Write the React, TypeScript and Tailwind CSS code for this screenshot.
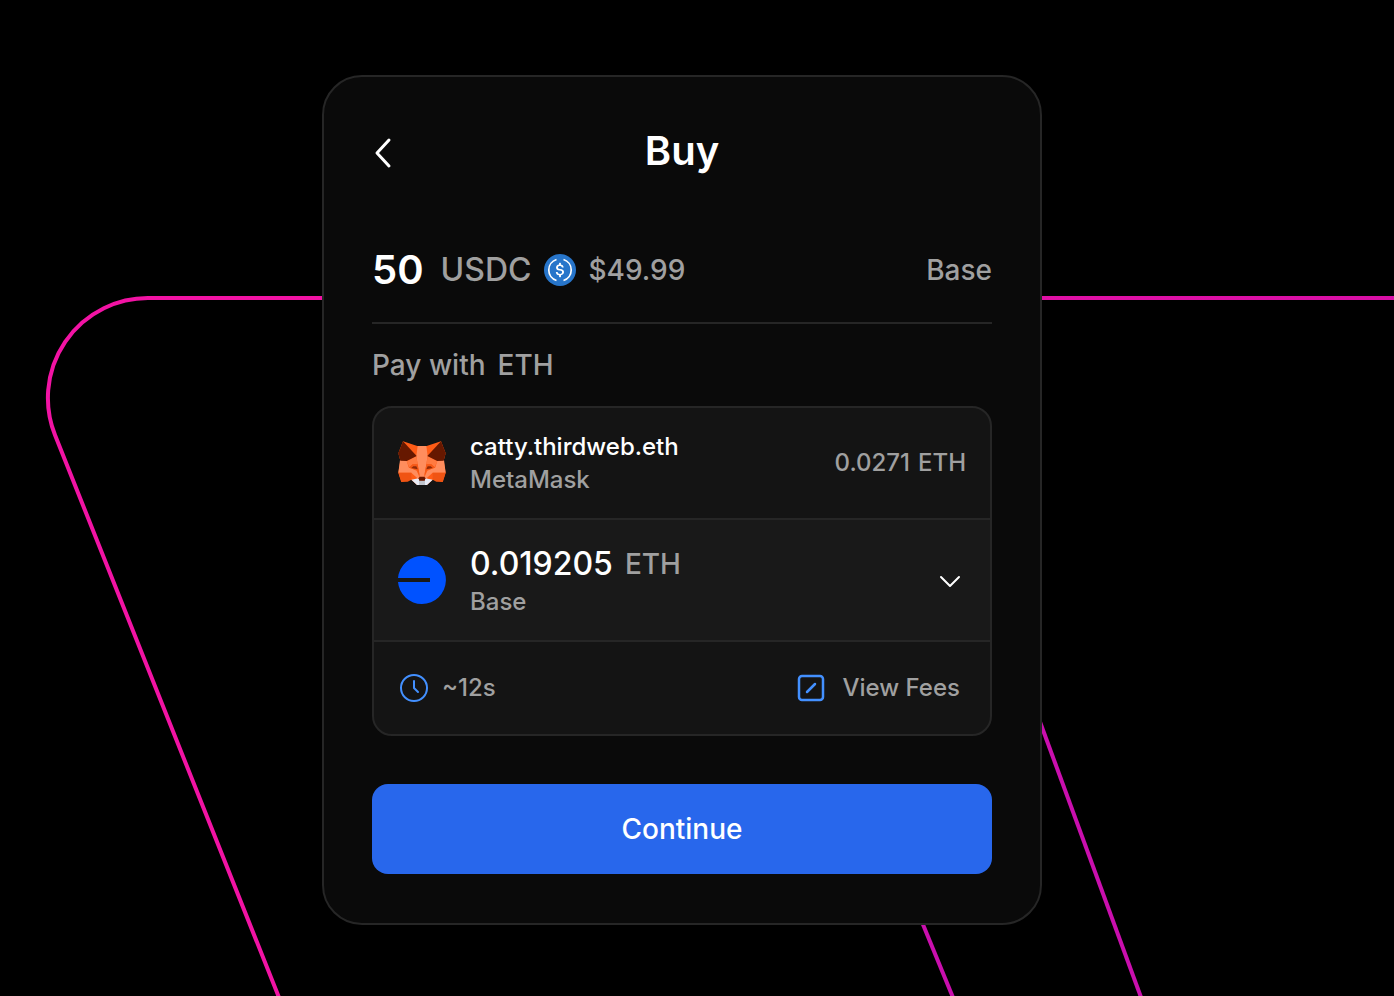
import type { ReactNode } from 'react'

const Backdrop = () => (
  <svg className="absolute left-0 top-0 h-[996px] w-[1394px]" viewBox="0 0 1394 996" fill="none" aria-hidden="true">
    <defs>
      <linearGradient id="neon" gradientUnits="userSpaceOnUse" x1="300" y1="0" x2="1394" y2="0">
        <stop offset="0" stopColor="#f213a4" />
        <stop offset="1" stopColor="#d80fa6" />
      </linearGradient>
    </defs>
    <g strokeWidth="4">
      <path stroke="url(#neon)" d="M1394 298H148A100 100 0 0 0 55 435L280 1000" />
      <path stroke="#ca0fae" d="M1032 700L1142 1000" />
      <path stroke="#ca0fae" d="M915 905L954 1000" />
    </g>
  </svg>
)

const UsdcIcon = () => (
  <svg className="size-8" viewBox="0 0 32 32" fill="none" aria-hidden="true">
    <circle cx="16" cy="16" r="16" fill="#2775ca" />
    <path
      fill="#fff"
      d="M20.022 18.124c0-2.124-1.28-2.852-3.84-3.156-1.828-.243-2.193-.728-2.193-1.578 0-.85.61-1.396 1.828-1.396 1.097 0 1.707.364 2.011 1.275a.458.458 0 0 0 .427.303h.975a.416.416 0 0 0 .427-.425v-.06a3.04 3.04 0 0 0-2.743-2.489V9.142c0-.243-.183-.425-.487-.486h-.915c-.243 0-.426.182-.487.486v1.396c-1.829.242-2.986 1.456-2.986 2.974 0 2.002 1.218 2.791 3.778 3.095 1.707.303 2.255.668 2.255 1.639 0 .97-.853 1.638-2.011 1.638-1.585 0-2.133-.667-2.316-1.578-.06-.242-.244-.364-.427-.364h-1.036a.416.416 0 0 0-.426.425v.06c.243 1.518 1.219 2.61 3.23 2.914v1.457c0 .242.183.425.487.485h.915c.243 0 .426-.182.487-.485V21.34c1.829-.303 3.047-1.578 3.047-3.217z"
    />
    <path stroke="#fff" strokeWidth="1.7" d="M12.500 5.500A11 11 0 0 0 12.500 26.500M19.500 5.500A11 11 0 0 1 19.500 26.500" />
  </svg>
)

const FoxIcon = () => (
  <svg className="size-12 shrink-0" viewBox="0 -5 144 144" aria-hidden="true">
    <path fill="#ff5c16" d="M15 2L58 16H86L129 2L143 38L137 60L143 96L134 124L106 116L87 133H57L38 116L10 124L1 96L7 60L1 38Z" />
    <path fill="#ff8d5d" d="M6 58L1 96H40L60 114L64 108L56 90L32 80L26 60Z" />
    <path fill="#ff8d5d" d="M138 58L143 96H104L84 114L80 108L88 90L112 80L118 60Z" />
    <path fill="#ff8d5d" d="M59 16H85L89 46L79 109H65L55 46Z" />
    <path fill="#ff7a40" d="M55 46L26 62L34 80L44 71H59Z" />
    <path fill="#ff7a40" d="M89 46L118 62L110 80L100 71H85Z" />
    <path fill="#f55a18" d="M44 71H59L66 108L58 89L32 81Z" />
    <path fill="#f55a18" d="M100 71H85L78 108L86 89L112 81Z" />
    <path fill="#f05413" d="M1 96H40V117L29 123L10 124Z" />
    <path fill="#f05413" d="M143 96H104V117L115 123L134 124Z" />
    <path fill="#661800" d="M15 2L1 38L7 60L26 61L56 46Z" />
    <path fill="#661800" d="M129 2L143 38L137 60L118 61L88 46Z" />
    <path fill="#8f2a08" d="M46 77H55L59 86L40 82Z" />
    <path fill="#8f2a08" d="M98 77H89L85 86L104 82Z" />
    <path fill="#e7ebf6" d="M40 117L62 113L64 121H80L82 113L104 117L87 133H57Z" />
    <path fill="#c0c4cd" d="M63 119H81V133H63Z" />
    <path fill="#661800" d="M65 108H79L82 113L80 120H64L62 113Z" />
  </svg>
)

const BaseIcon = () => (
  <svg className="size-12 shrink-0" viewBox="0 0 48 48" aria-hidden="true">
    <path fill="#0052ff" d="M24 48A24 24 0 1 0 0 22H32V26H0A24 24 0 0 0 24 48Z" />
  </svg>
)

const ClockIcon = () => (
  <svg className="size-8" viewBox="0 0 32 32" fill="none" stroke="#4390ff" strokeWidth="2" strokeLinecap="round" strokeLinejoin="round" aria-hidden="true">
    <circle cx="16" cy="16" r="13" />
    <path d="M16 9V16L20 20" />
  </svg>
)

const FeesIcon = () => (
  <svg className="size-8" viewBox="0 0 32 32" fill="none" stroke="#4390ff" strokeWidth="2.5" strokeLinecap="round" aria-hidden="true">
    <rect x="4" y="4" width="24" height="24" rx="3" />
    <path d="M12 20L20 12" />
  </svg>
)

const Row = ({ children, className }: { children: ReactNode; className: string }) => (
  <div className={`flex items-center px-6 ${className}`}>{children}</div>
)

export default function App() {
  return (
    <main
      className="relative min-h-screen overflow-hidden bg-black pb-[71px] pr-[30px] pt-[75px] font-medium text-[#a0a0a0]"
      style={{ fontFamily: 'Inter, "Liberation Sans", sans-serif' }}
    >
      <Backdrop />
      <section className="relative mx-auto max-w-[720px] rounded-[40px] border-2 border-[#262626] bg-[#0a0a0a] px-12 pb-[49px]">
        <header className="grid grid-cols-3 items-center pt-12">
          <button type="button" aria-label="Back" className="w-8 text-white">
            <svg className="mt-1 h-8 w-6" viewBox="0 0 24 32" fill="none" stroke="currentColor" strokeWidth="3" strokeLinecap="round" strokeLinejoin="round" aria-hidden="true">
              <path d="M17 3L5 16L17 29" />
            </svg>
          </button>
          <h1 className="text-center text-[40px] font-semibold leading-[52px] text-white">Buy</h1>
        </header>

        <div className="mt-[68px] flex items-center border-b-2 border-[#262626] pb-[27px]">
          <span className="text-[40px] font-semibold leading-[50px] text-white">50</span>
          <span className="ml-[17px] mr-[13px] text-[32px]">USDC</span>
          <UsdcIcon />
          <span className="ml-3 text-[28px]">$49.99</span>
          <span className="ml-auto text-[28px]">Base</span>
        </div>

        <p className="mt-5 flex gap-3 text-[28px] leading-[42px]">
          <span>Pay with</span>
          <span>ETH</span>
        </p>

        <div className="mt-5 overflow-hidden rounded-[20px] border-2 border-[#262626] bg-[#141414] text-2xl">
          <Row className="h-[110px]">
            <FoxIcon />
            <div className="ml-6">
              <p className="leading-[33px] text-white">catty.thirdweb.eth</p>
              <p className="leading-[33px]">MetaMask</p>
            </div>
            <span className="ml-auto flex gap-2">
              <span>0.0271</span>
              <span>ETH</span>
            </span>
          </Row>
          <Row className="h-[124px] border-y-2 border-[#262626] bg-[#191919]">
            <BaseIcon />
            <div className="ml-6 pt-0.5">
              <p className="flex items-center gap-3">
                <span className="text-[32px] leading-[42px] text-white">0.019205</span>
                <span className="text-[28px] leading-[42px]">ETH</span>
              </p>
              <p className="leading-[34px]">Base</p>
            </div>
            <button type="button" aria-label="Choose token" className="ml-auto mr-1 text-white">
              <svg className="size-6" viewBox="0 0 24 24" fill="none" stroke="currentColor" strokeWidth="2" strokeLinecap="round" strokeLinejoin="round" aria-hidden="true">
                <path d="M3 9L12 18L21 9" />
              </svg>
            </button>
          </Row>
          <Row className="h-[92px] justify-between">
            <span className="flex items-center gap-3">
              <ClockIcon />
              ~12s
            </span>
            <button type="button" className="mr-1.5 flex items-center gap-4">
              <FeesIcon />
              View Fees
            </button>
          </Row>
        </div>

        <button type="button" className="mt-12 h-[90px] w-full rounded-2xl bg-[#2867ec] text-[28px] text-white">
          Continue
        </button>
      </section>
    </main>
  )
}
